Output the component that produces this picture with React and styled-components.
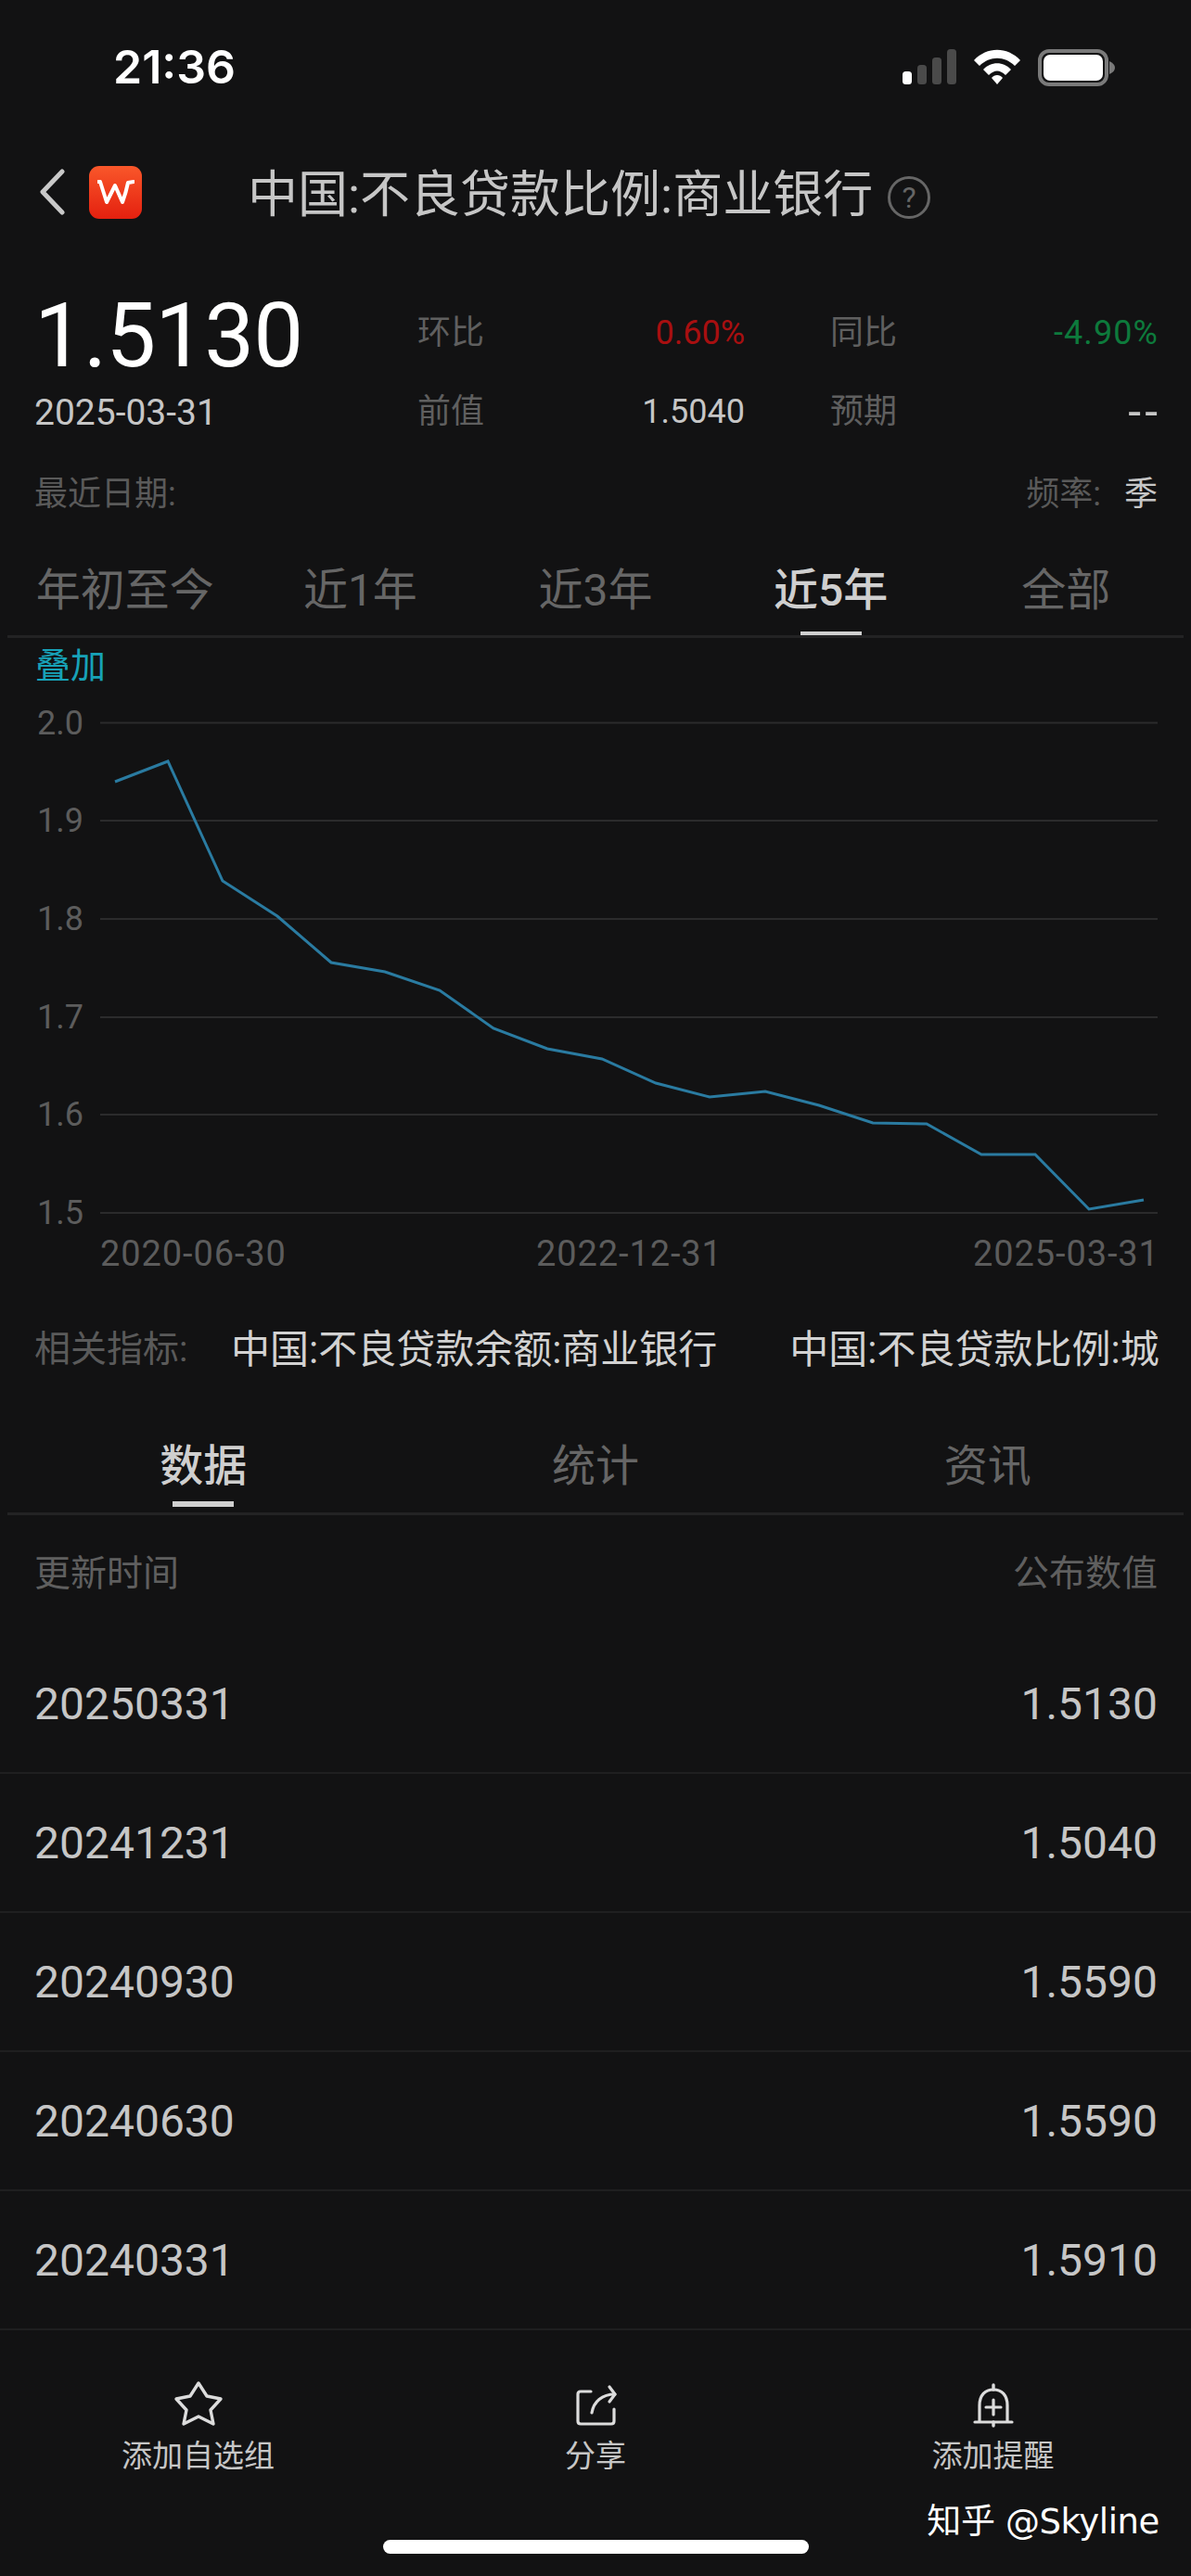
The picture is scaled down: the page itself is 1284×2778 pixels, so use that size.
import React from 'react'
import styled, { createGlobalStyle } from 'styled-components'

const CJK = `Roboto, "Noto Sans CJK SC", sans-serif`

const GlobalStyle = createGlobalStyle`
  html, body { margin: 0; padding: 0; background: #121213; }
  * { box-sizing: border-box; }
`

const Page = styled.div`
  position: relative;
  width: 1284px;
  height: 2778px;
  overflow: hidden;
  display: flex;
  flex-direction: column;
  background: #121213;
  font-family: ${CJK};
  color: #cfcfcf;
  & > * { flex: none; }
`

const StatusBar = styled.div`
  height: 146px;
  display: flex;
  justify-content: space-between;
  align-items: flex-start;
  padding: 53px 82px 0 122px;
`
const Clock = styled.div`
  font-family: Inter, sans-serif;
  font-weight: 600;
  font-size: 50px;
  line-height: 38px;
  color: #fff;
`
const StatusIcons = styled.div`
  display: flex;
  align-items: flex-start;
  gap: 19px;
`

const NavBar = styled.div`
  height: 122px;
  display: flex;
  align-items: center;
  padding: 0 0 0 43px;
`
const LogoBox = styled.div`
  width: 57px;
  height: 57px;
  margin-left: 26px;
  margin-right: 114px;
  border-radius: 11px;
  background: linear-gradient(#f9572a, #e4200f);
  display: flex;
  align-items: center;
  justify-content: center;
`
const Title = styled.div`
  font-size: 54px;
  line-height: 60px;
  margin-top: 8px;
  color: #c6c6c6;
`
const HelpIcon = styled.div`
  width: 46px;
  height: 46px;
  margin-left: 16px;
  margin-top: 12px;
  border: 3px solid #666;
  border-radius: 50%;
  color: #666;
  font-size: 32px;
  line-height: 40px;
  text-align: center;
`

const Quote = styled.div`
  display: grid;
  grid-template-columns: 321px 353px 353px;
  column-gap: 92px;
  padding-left: 37px;
  height: 236px;
`
const Price = styled.div`
  font-size: 96px;
  line-height: 100px;
  letter-spacing: -1px;
  color: #fff;
  margin-top: 44px;
`
const QuoteDate = styled.div`
  font-size: 39px;
  line-height: 44px;
  color: #c6c6c6;
  margin-top: 11px;
`
const StatCol = styled.div`
  display: grid;
  grid-auto-rows: 85px;
  padding-top: 66px;
`
const StatRow = styled.div`
  display: flex;
  justify-content: space-between;
  align-items: flex-start;
  line-height: 50px;
`
const StatLabel = styled.span`
  font-size: 36px;
  color: #5f5f5f;
`
const StatValue = styled.span`
  font-size: ${p => p.$size || 36}px;
  color: ${p => p.$color || '#c6c6c6'};
  letter-spacing: ${p => p.$track || 0}px;
  margin-right: ${p => -(p.$track || 0)}px;
`

const MetaRow = styled.div`
  display: flex;
  justify-content: space-between;
  align-items: center;
  padding: 0 36px 0 37px;
  height: 50px;
  font-size: 36px;
  color: #5a5a5a;
`
const Frequency = styled.b`
  font-weight: 400;
  color: #c6c6c6;
  margin-left: 25px;
`

const TabRow = styled.div`
  display: grid;
  grid-template-columns: repeat(${p => p.$count}, 1fr);
  height: ${p => p.$height}px;
  margin: ${p => p.$top}px 8px 0;
  border-bottom: 3px solid #232324;
`
const Tab = styled.div`
  position: relative;
  text-align: center;
  font-size: ${p => p.$size}px;
  line-height: ${p => p.$line}px;
  font-weight: ${p => (p.$active ? 500 : 400)};
  color: ${p => (p.$active ? '#cfcfcf' : '#666')};
  &::after {
    content: '';
    display: ${p => (p.$active ? 'block' : 'none')};
    position: absolute;
    left: 50%;
    bottom: ${p => p.$bar}px;
    width: 66px;
    height: ${p => p.$barH}px;
    margin-left: -33px;
    background: #cfcfcf;
  }
`

const Overlay = styled.div`
  padding-left: 38px;
  font-size: 38px;
  line-height: 60px;
  height: 62px;
  color: #17a2b8;
`

const ChartWrap = styled.div`
  height: 630px;
  svg { display: block; }
`
const ChartText = styled.text`
  font-family: Roboto, sans-serif;
  font-size: ${p => p.$size || 36}px;
  letter-spacing: ${p => p.$track || 0}px;
  fill: #5c5c5c;
`

const Related = styled.div`
  display: flex;
  align-items: center;
  height: 60px;
  margin-top: 41px;
  padding-left: 37px;
  white-space: nowrap;
  font-size: 42px;
  color: #d2d2d2;
`
const RelatedLabel = styled.span`
  font-size: 39px;
  color: #5a5a5a;
  width: 212px;
  flex: none;
`
const RelatedItem = styled.span`
  flex: none;
  margin-right: 78px;
`

const TableHead = styled.div`
  display: flex;
  justify-content: space-between;
  padding: 0 36px 0 37px;
  margin-top: 36px;
  font-size: 39px;
  line-height: 54px;
  color: #5f5f5f;
`
const Rows = styled.div`
  margin-top: 39px;
`
const Row = styled.div`
  height: 150px;
  display: flex;
  justify-content: space-between;
  align-items: center;
  padding: 0 36px 0 37px;
  border-bottom: 2px solid #1f1f20;
  font-size: 48px;
  color: #c6c6c6;
`

const Toolbar = styled.div`
  display: grid;
  grid-template-columns: 427px 430px 427px;
  height: 164px;
  padding-top: 53px;
`
const ToolItem = styled.div`
  display: flex;
  flex-direction: column;
  align-items: center;
  font-size: 33px;
  line-height: 46px;
  color: #c6c6c6;
  svg { display: block; height: 52px; margin-bottom: 8px; }
`
const Watermark = styled.div`
  position: absolute;
  right: 34px;
  bottom: 34px;
  font-family: "DejaVu Sans", "Noto Sans CJK SC", sans-serif;
  font-size: 37px;
  line-height: 48px;
  letter-spacing: -0.4px;
  color: #fff;
`
const HomeBar = styled.div`
  align-self: center;
  width: 459px;
  height: 15px;
  margin-top: 62px;
  border-radius: 8px;
  background: #fff;
`

const SignalIcon = () => (
  <svg width="58" height="38" viewBox="0 0 58 38">
    <rect x="0" y="24" width="10" height="14" rx="3.5" fill="#fff" />
    <rect x="16" y="17" width="10" height="21" rx="3.5" fill="#4a4a4a" />
    <rect x="32" y="9" width="10" height="29" rx="3.5" fill="#4a4a4a" />
    <rect x="48" y="0" width="10" height="38" rx="3.5" fill="#4a4a4a" />
  </svg>
)

const WifiIcon = () => (
  <svg width="50" height="38" viewBox="0 0 50 38">
    <path d="M0 12 C14 -3 36 -3 50 12 L44 18 C33 7 17 7 6 18 Z" fill="#fff" />
    <path d="M10 22 C18 13 32 13 40 22 L34 28 C28 22 22 22 16 28 Z" fill="#fff" />
    <path d="M19 31 C22 27 28 27 31 31 L25 38 Z" fill="#fff" />
  </svg>
)

const BatteryIcon = () => (
  <svg width="83" height="40" viewBox="0 0 83 40">
    <rect x="2" y="2" width="72" height="36" rx="10" fill="none" stroke="#7a7a7a" strokeWidth="4" />
    <rect x="6" y="6" width="64" height="28" rx="7" fill="#fff" />
    <path d="M77 13 C81 15 83 17 83 20 C83 23 81 25 77 27 Z" fill="#7a7a7a" />
  </svg>
)

const BackIcon = () => (
  <svg width="27" height="50" viewBox="0 0 27 50">
    <path d="M24 3 L3 25 L24 47" fill="none" stroke="#c9c9c9" strokeWidth="5" strokeLinecap="round" strokeLinejoin="round" />
  </svg>
)

const LogoMark = () => (
  <svg width="40" height="28" viewBox="0 0 40 28">
    <path d="M1 3 H3 L10 25 L19 7 L27 25 C30 17 32 9 33 4 L39 3" fill="none" stroke="#fff" strokeWidth="4" strokeLinecap="round" strokeLinejoin="round" />
  </svg>
)

const StarIcon = () => (
  <svg width="56" height="52" viewBox="0 0 56 52">
    <path d="M28 4 L37 18 L52 21 L41 33 L44 48 L28 40 L12 48 L15 33 L4 21 L19 18 Z" fill="none" stroke="#dcdcdc" strokeWidth="3.4" strokeLinejoin="round" />
  </svg>
)

const ShareIcon = () => (
  <svg width="46" height="52" viewBox="0 0 46 52">
    <path d="M18 13 H7 Q4 13 4 16 V45 Q4 48 7 48 H40 Q43 48 43 45 V32" fill="none" stroke="#dcdcdc" strokeWidth="3.2" strokeLinecap="round" />
    <path d="M19 36 C21 24 30 16 44 16" fill="none" stroke="#dcdcdc" strokeWidth="3.2" strokeLinecap="round" />
    <path d="M38 8 L44 16 L38 24" fill="none" stroke="#dcdcdc" strokeWidth="3.2" strokeLinecap="round" strokeLinejoin="round" />
  </svg>
)

const BellIcon = () => (
  <svg width="46" height="52" viewBox="0 0 46 52">
    <path d="M23 6 V11" stroke="#dcdcdc" strokeWidth="3.4" strokeLinecap="round" />
    <path d="M8 46 V28 C8 17 14 11 23 11 C32 11 38 17 38 28 V46" fill="none" stroke="#dcdcdc" strokeWidth="3.2" />
    <path d="M3 46 H43" stroke="#dcdcdc" strokeWidth="3.2" strokeLinecap="round" />
    <path d="M23 46 V50" stroke="#dcdcdc" strokeWidth="3.4" strokeLinecap="round" />
    <path d="M23 22 V38 M15 30 H31" stroke="#dcdcdc" strokeWidth="3.2" strokeLinecap="round" />
  </svg>
)

const linePoints = [
  [124, 843], [181, 821], [240, 950], [299, 988], [357, 1038], [415, 1048], [474, 1068],
  [532, 1109], [590, 1131], [649, 1142], [707, 1168], [765, 1183], [825, 1177], [883, 1192],
  [941, 1211], [999, 1212], [1058, 1245], [1116, 1245], [1174, 1304], [1233, 1294],
]
const CHART_TOP = 750
const grid = [
  ['2.0', 779.5], ['1.9', 885], ['1.8', 991], ['1.7', 1097], ['1.6', 1202], ['1.5', 1308],
]
const dates = [['2020-06-30', 108], ['2022-12-31', 578], ['2025-03-31', 1049]]

const Chart = () => (
  <ChartWrap>
    <svg width="1284" height="630" viewBox={`0 ${CHART_TOP} 1284 630`}>
      {grid.map(([label, y]) => (
        <g key={label}>
          <line x1="108" x2="1248" y1={y} y2={y} stroke="#2b2b2c" strokeWidth="2" />
          <ChartText x="40" y={y + 12}>{label}</ChartText>
        </g>
      ))}
      <polyline
        points={linePoints.map(p => p.join(',')).join(' ')}
        fill="none"
        stroke="#2a7ba1"
        strokeWidth="3"
      />
      {dates.map(([label, x]) => (
        <ChartText key={label} x={x} y="1365" $size={38} $track={0.9}>{label}</ChartText>
      ))}
    </svg>
  </ChartWrap>
)

const rows = [
  ['20250331', '1.5130'],
  ['20241231', '1.5040'],
  ['20240930', '1.5590'],
  ['20240630', '1.5590'],
  ['20240331', '1.5910'],
]

const App = () => (
  <Page>
    <GlobalStyle />
    <StatusBar>
      <Clock>21:36</Clock>
      <StatusIcons>
        <SignalIcon />
        <WifiIcon />
        <BatteryIcon />
      </StatusIcons>
    </StatusBar>

    <NavBar>
      <BackIcon />
      <LogoBox><LogoMark /></LogoBox>
      <Title>中国:不良贷款比例:商业银行</Title>
      <HelpIcon>?</HelpIcon>
    </NavBar>

    <Quote>
      <div>
        <Price>1.5130</Price>
        <QuoteDate>2025-03-31</QuoteDate>
      </div>
      <StatCol>
        <StatRow><StatLabel>环比</StatLabel><StatValue $color="#a80f10">0.60%</StatValue></StatRow>
        <StatRow><StatLabel>前值</StatLabel><StatValue>1.5040</StatValue></StatRow>
      </StatCol>
      <StatCol>
        <StatRow><StatLabel>同比</StatLabel><StatValue $color="#0d7a3c" $track={1.1}>-4.90%</StatValue></StatRow>
        <StatRow><StatLabel>预期</StatLabel><StatValue $size={50} $track={4}>--</StatValue></StatRow>
      </StatCol>
    </Quote>

    <MetaRow>
      <span>最近日期:</span>
      <span>频率:<Frequency>季</Frequency></span>
    </MetaRow>

    <TabRow $count={5} $height={95} $top={39}>
      <Tab $size={48} $line={88} $bar={0} $barH={4}>年初至今</Tab>
      <Tab $size={48} $line={88} $bar={0} $barH={4}>近1年</Tab>
      <Tab $size={48} $line={88} $bar={0} $barH={4}>近3年</Tab>
      <Tab $active $size={48} $line={88} $bar={0} $barH={4}>近5年</Tab>
      <Tab $size={48} $line={88} $bar={0} $barH={4}>全部</Tab>
    </TabRow>

    <Overlay>叠加</Overlay>
    <Chart />

    <Related>
      <RelatedLabel>相关指标:</RelatedLabel>
      <RelatedItem>中国:不良贷款余额:商业银行</RelatedItem>
      <RelatedItem>中国:不良贷款比例:城</RelatedItem>
    </Related>

    <TabRow $count={3} $height={97} $top={56}>
      <Tab $active $size={47} $line={87} $bar={6} $barH={6}>数据</Tab>
      <Tab $size={47} $line={87} $bar={6} $barH={6}>统计</Tab>
      <Tab $size={47} $line={87} $bar={6} $barH={6}>资讯</Tab>
    </TabRow>

    <TableHead>
      <span>更新时间</span>
      <span>公布数值</span>
    </TableHead>

    <Rows>
      {rows.map(([date, value]) => (
        <Row key={date}>
          <span>{date}</span>
          <span>{value}</span>
        </Row>
      ))}
    </Rows>

    <Toolbar>
      <ToolItem><StarIcon />添加自选组</ToolItem>
      <ToolItem><ShareIcon />分享</ToolItem>
      <ToolItem><BellIcon />添加提醒</ToolItem>
    </Toolbar>
    <HomeBar />
    <Watermark>知乎 @Skyline</Watermark>
  </Page>
)

export default App
